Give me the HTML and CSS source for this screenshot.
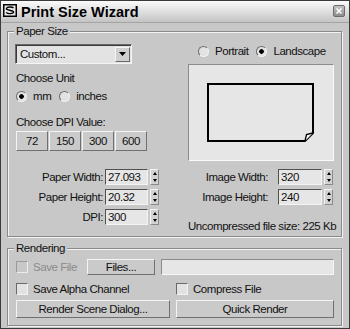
FILE: index.html
```html
<!DOCTYPE html>
<html>
<head>
<meta charset="utf-8">
<link rel="stylesheet" href="styles.css">
</head>
<body>
<div class="window">
  <div class="titlebar">
    <svg class="app-icon" width="14" height="13" viewBox="0 0 14 13">
      <rect x="0.75" y="0.75" width="12.5" height="11.5" fill="#ececec" stroke="#000" stroke-width="1.5"/>
      <path d="M10.5 4.2 C9.5 2.6 4.2 2.6 3.4 4.6 C2.8 6.4 10.4 6 10.6 8 C10.8 10 4.5 10.2 3.2 8.4" fill="none" stroke="#000" stroke-width="1.4"/>
    </svg>
    <span class="title">Print Size Wizard</span>
    <span class="close">
      <svg width="10" height="10" viewBox="0 0 10 10"><path d="M2.5 2.5 L7.5 7.5 M7.5 2.5 L2.5 7.5" stroke="#fff" stroke-width="1.6"/></svg>
    </span>
  </div>
  <div class="body">
    <fieldset class="group paper">
      <legend>Paper Size</legend>
      <div class="paper-grid">
        <div class="left-top">
          <div class="select">
            <span class="select-text">Custom...</span>
            <span class="select-btn"><svg width="7" height="4" viewBox="0 0 7 4"><path d="M0 0 H7 L3.5 4 Z" fill="#000"/></svg></span>
          </div>
          <div class="caption unit-caption">Choose Unit</div>
          <div class="radio-row">
            <span class="radio on"></span><span class="radio-text">mm</span>
            <span class="radio"></span><span class="radio-text">inches</span>
          </div>
          <div class="caption dpi-caption">Choose DPI Value:</div>
          <div class="dpi-buttons">
            <span class="btn dpi">72</span>
            <span class="btn dpi">150</span>
            <span class="btn dpi">300</span>
            <span class="btn dpi">600</span>
          </div>
        </div>
        <div class="right-top">
          <div class="radio-row orient">
            <span class="radio"></span><span class="radio-text">Portrait</span>
            <span class="radio on"></span><span class="radio-text">Landscape</span>
          </div>
          <div class="preview">
            <svg width="144" height="95" viewBox="0 0 144 95">
              <path d="M19 19 H124 V68 L116 76 H19 Z" fill="#e6e6e6" stroke="#000" stroke-width="2" stroke-linejoin="miter"/>
              <path d="M116 76 L117.5 69.5 L124 68" fill="#f6f6f6" stroke="#000" stroke-width="1.3"/>
            </svg>
          </div>
        </div>
        <div class="fields left-fields">
          <div class="field-row"><span class="field-label">Paper Width:</span><span class="num">27.093</span><span class="spin"><i class="up"></i><i class="down"></i></span></div>
          <div class="field-row"><span class="field-label">Paper Height:</span><span class="num">20.32</span><span class="spin"><i class="up"></i><i class="down"></i></span></div>
          <div class="field-row"><span class="field-label">DPI:</span><span class="num">300</span><span class="spin"><i class="up"></i><i class="down"></i></span></div>
        </div>
        <div class="fields right-fields">
          <div class="field-row"><span class="field-label">Image Width:</span><span class="num">320</span><span class="spin"><i class="up"></i><i class="down"></i></span></div>
          <div class="field-row"><span class="field-label">Image Height:</span><span class="num">240</span><span class="spin"><i class="up"></i><i class="down"></i></span></div>
          <div class="filesize">Uncompressed file size: 225 Kb</div>
        </div>
      </div>
    </fieldset>
    <fieldset class="group render">
      <legend>Rendering</legend>
      <div class="save-row">
        <span class="check-item save-file"><span class="checkbox disabled"></span><span class="disabled-text">Save File</span></span>
        <span class="btn files">Files...</span>
        <span class="textfield"></span>
      </div>
      <div class="two-col checks">
        <span class="check-item"><span class="checkbox"></span>Save Alpha Channel</span>
        <span class="check-item"><span class="checkbox"></span>Compress File</span>
      </div>
      <div class="two-col actions">
        <span class="btn action">Render Scene Dialog...</span>
        <span class="btn action">Quick Render</span>
      </div>
    </fieldset>
  </div>
</div>
</body>
</html>
```
FILE: styles.css
```css
* { box-sizing: border-box; }
html, body { margin: 0; padding: 0; }
body {
  width: 350px;
  height: 329px;
  overflow: hidden;
  background: #c8c8c8;
  font-family: "Liberation Sans", Arial, sans-serif;
  font-size: 11.5px;
  letter-spacing: -0.45px;
  line-height: 14px;
  color: #111;
  white-space: nowrap;
}
.window {
  width: 350px;
  height: 329px;
  border: 1px solid #3a3a3a;
  display: flex;
  flex-direction: column;
  background: #c8c8c8;
}
.titlebar {
  height: 22px;
  flex: none;
  display: flex;
  align-items: flex-start;
  padding: 3px 4px 0 2px;
  background: linear-gradient(#fbfbfb, #e2e2e2 45%, #c4c4c4);
  border-bottom: 1px solid #a4a4a4;
}
.app-icon { flex: none; display: block; }
.title {
  margin-left: 4px;
  font-weight: bold;
  font-size: 14.5px;
  letter-spacing: 0;
  line-height: 16px;
  color: #000;
}
.close {
  margin-left: auto;
  margin-top: 1px;
  width: 12px;
  height: 12px;
  border: 1px solid #6c6c6c;
  border-radius: 2px;
  background: linear-gradient(#c4c4c4, #8c8c8c);
  display: flex;
  align-items: center;
  justify-content: center;
}
.close svg { display: block; }
.body {
  flex: 1;
  display: flex;
  flex-direction: column;
  padding: 1px 7px 0 6px;
}
.group {
  margin: 0;
  border: 1px solid #8a8a8a;
  box-shadow: inset 1px 1px 0 #f2f2f2, 1px 1px 0 #f2f2f2;
  min-width: 0;
}
.group legend {
  padding: 0 2px;
  margin-left: -2px;
  background: #c8c8c8;
  line-height: 14px;
}
.paper { padding: 6px 7px 3px 8px; }
.paper-grid {
  display: grid;
  grid-template-columns: 143px 146px;
  column-gap: 29px;
  row-gap: 8px;
}
.left-top, .right-top {
  display: flex;
  flex-direction: column;
  align-items: flex-start;
}
.select {
  margin-left: -1px;
  width: 117px;
  height: 20px;
  display: flex;
  align-items: center;
  padding-left: 4px;
  border: 1px solid;
  border-color: #6a6a6a #f4f4f4 #f4f4f4 #6a6a6a;
  box-shadow: inset 1px 1px 0 #3a3a3a;
  background: #e3e3e3;
}
.select-text { flex: 1; }
.select-btn {
  width: 15px;
  height: 15px;
  margin-right: 1px;
  display: flex;
  align-items: center;
  justify-content: center;
  background: #cfcfcf;
  border: 1px solid;
  border-color: #f4f4f4 #6a6a6a #6a6a6a #f4f4f4;
}
.select-btn svg { display: block; }
.caption { height: 14px; }
.unit-caption { margin-top: 7px; }
.dpi-caption { margin-top: 12px; }
.radio-row {
  display: flex;
  align-items: center;
  height: 14px;
  margin-top: 4px;
}
.radio {
  width: 11px;
  height: 11px;
  flex: none;
  border-radius: 50%;
  border: 1px solid;
  border-color: #6c6c6c #f2f2f2 #f2f2f2 #6c6c6c;
  background: #e2e2e2;
  margin-right: 6px;
}
.radio.on {
  background: radial-gradient(circle, #000 0 2px, #e2e2e2 2.6px);
}
.radio-text { margin-right: 8px; }
.orient { margin-top: 0; padding-left: 10px; }
.dpi-buttons {
  display: flex;
  gap: 1px;
  margin-top: 2px;
}
.btn {
  display: flex;
  align-items: center;
  justify-content: center;
  background: #cacaca;
  border: 1px solid;
  border-color: #f4f4f4 #707070 #707070 #f4f4f4;
  color: #111;
}
.dpi { width: 32px; height: 20px; }
.preview {
  margin-top: 6px;
  width: 146px;
  height: 97px;
  border: 1px solid;
  border-color: #8c8c8c #fafafa #fafafa #8c8c8c;
  background: #e6e6e6;
}
.preview svg { display: block; }
.fields {
  display: flex;
  flex-direction: column;
  gap: 4px;
}
.right-fields { padding-right: 1px; }
.field-row {
  display: flex;
  justify-content: flex-end;
  align-items: center;
  height: 16px;
}
.num {
  height: 16px;
  margin-left: 2px;
  padding-left: 2px;
  border: 1px solid;
  border-color: #505050 #f4f4f4 #f4f4f4 #505050;
  background: #e6e6e6;
  line-height: 14px;
}
.left-fields .num { width: 43px; }
.right-fields .num { width: 44px; margin-left: 10px; }
.spin {
  width: 9px;
  height: 16px;
  margin-left: 2px;
  display: flex;
  flex-direction: column;
  border: 1px solid;
  border-color: #f4f4f4 #8a8a8a #8a8a8a #f4f4f4;
  background: #d2d2d2;
}
.spin i {
  flex: 1;
  display: flex;
  align-items: center;
  justify-content: center;
}
.spin i::before {
  content: "";
  width: 0;
  height: 0;
  border-left: 2.5px solid transparent;
  border-right: 2.5px solid transparent;
}
.spin .up::before { border-bottom: 3px solid #000; }
.spin .down::before { border-top: 3px solid #000; }
.filesize {
  margin-top: 10px;
  text-align: right;
  height: 14px;
}
.render {
  margin-top: 4px;
  padding: 4px 7px 7px 8px;
}
.save-row {
  display: flex;
  align-items: center;
  height: 16px;
}
.check-item {
  display: flex;
  align-items: center;
  height: 14px;
}
.save-file { width: 71px; }
.checkbox {
  width: 12px;
  height: 12px;
  flex: none;
  margin-right: 5px;
  border: 1px solid;
  border-color: #6a6a6a #f2f2f2 #f2f2f2 #6a6a6a;
  background: #e2e2e2;
}
.checkbox.disabled {
  background: #c8c8c8;
  border-color: #9a9a9a #ececec #ececec #9a9a9a;
}
.disabled-text { color: #8c8c8c; }
.files { width: 68px; height: 16px; }
.textfield {
  flex: 1;
  height: 16px;
  margin-left: 6px;
  border: 1px solid;
  border-color: #8a8a8a #f6f6f6 #f6f6f6 #8a8a8a;
  background: #e6e6e6;
}
.two-col {
  display: grid;
  grid-template-columns: 154px 1fr;
  column-gap: 6px;
}
.checks { margin-top: 7px; }
.actions { margin-top: 4px; }
.action { height: 18px; }
```
